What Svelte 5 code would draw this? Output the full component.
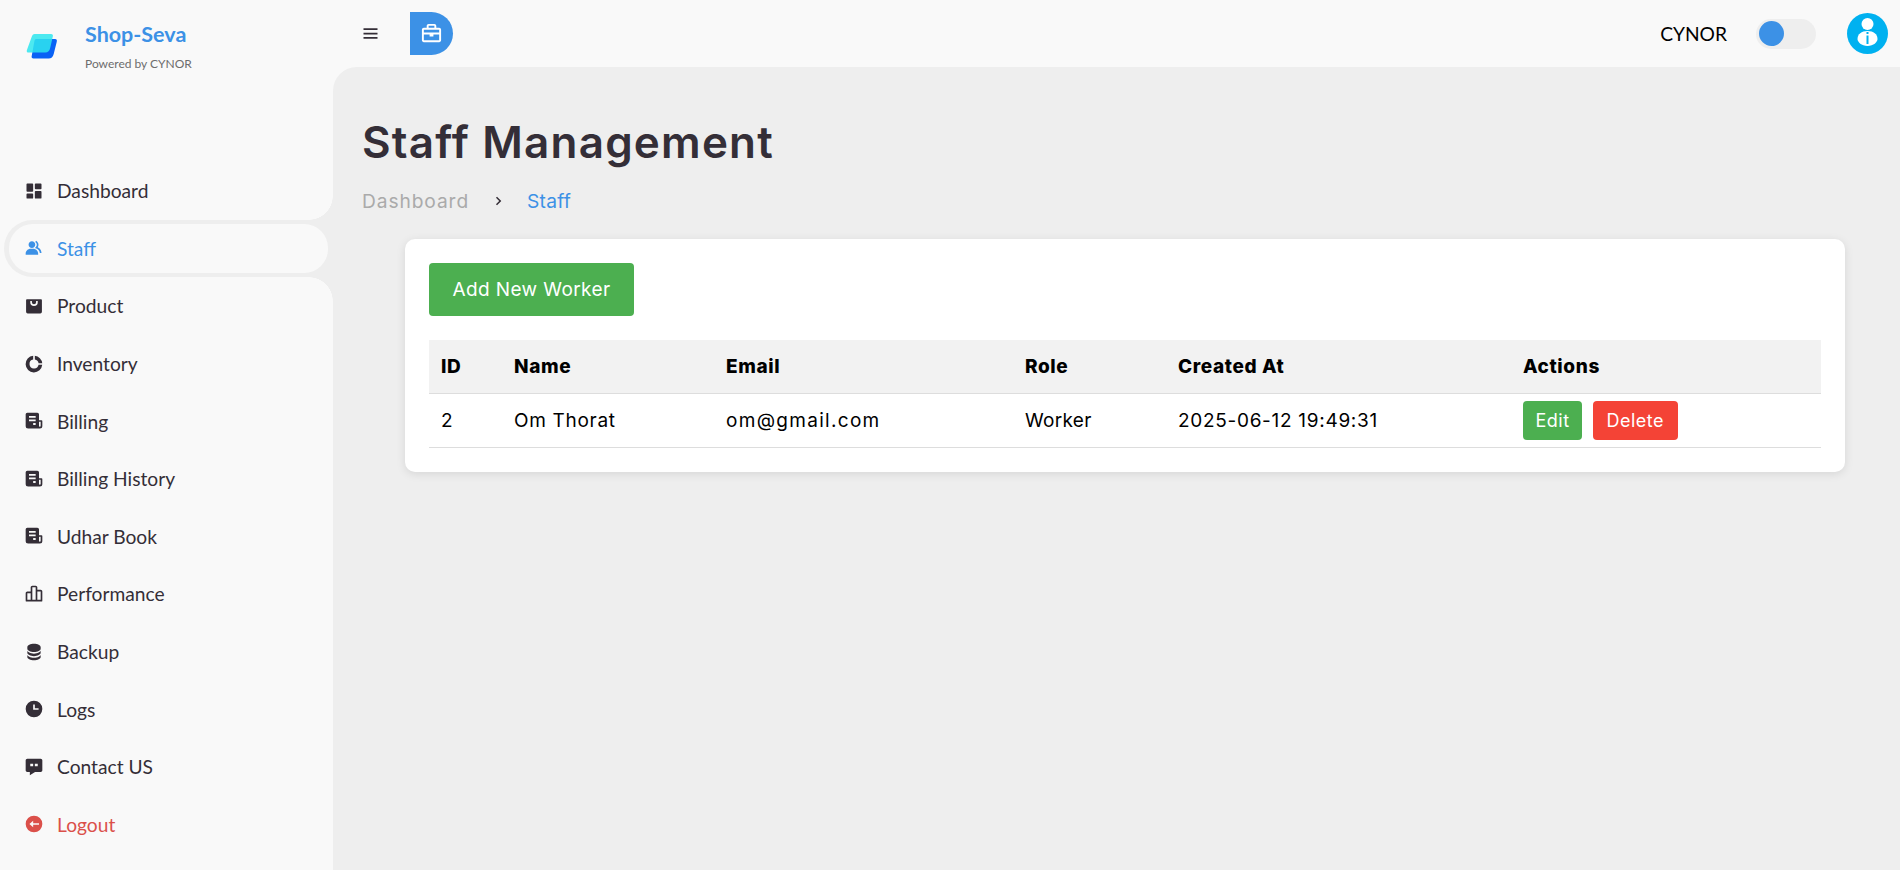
<script>
  const menu = [
    { label: 'Dashboard', icon: 'dashboard' },
    { label: 'Staff', icon: 'group', active: true },
    { label: 'Product', icon: 'bag' },
    { label: 'Inventory', icon: 'doughnut' },
    { label: 'Billing', icon: 'receipt' },
    { label: 'Billing History', icon: 'receipt' },
    { label: 'Udhar Book', icon: 'receipt' },
    { label: 'Performance', icon: 'bars' },
    { label: 'Backup', icon: 'data' },
    { label: 'Logs', icon: 'time' },
    { label: 'Contact US', icon: 'message' },
    { label: 'Logout', icon: 'logout', danger: true }
  ];

  const icons = {
    dashboard: 'M4 13h6a1 1 0 0 0 1-1V4a1 1 0 0 0-1-1H4a1 1 0 0 0-1 1v8a1 1 0 0 0 1 1zm-1 7a1 1 0 0 0 1 1h6a1 1 0 0 0 1-1v-4a1 1 0 0 0-1-1H4a1 1 0 0 0-1 1v4zm10 0a1 1 0 0 0 1 1h6a1 1 0 0 0 1-1v-7a1 1 0 0 0-1-1h-6a1 1 0 0 0-1 1v7zm1-10h6a1 1 0 0 0 1-1V4a1 1 0 0 0-1-1h-6a1 1 0 0 0-1 1v5a1 1 0 0 0 1 1z',
    group: 'M16.604 11.048a5.67 5.67 0 0 0 .751-3.44c-.179-1.784-1.175-3.361-2.803-4.44l-1.105 1.666c1.119.742 1.8 1.799 1.918 2.974a3.693 3.693 0 0 1-1.072 2.986l-1.192 1.192 1.618.475C18.951 13.701 19 17.957 19 18h2c0-1.789-.956-5.285-4.396-6.952zM9.5 12c2.206 0 4-1.794 4-4s-1.794-4-4-4-4 1.794-4 4 1.794 4 4 4zm1.5 1H8c-3.309 0-6 2.691-6 6v1h15v-1c0-3.309-2.691-6-6-6z',
    bag: 'M3.500 4h17a1 1 0 0 1 1 1v14a2 2 0 0 1-2 2h-15a2 2 0 0 1-2-2V5a1 1 0 0 1 1-1zM7.500 6v1.500a4.500 4.500 0 0 0 9 0V6h-2v1.500a2.500 2.500 0 0 1-5 0V6z',
    doughnut: 'M11 2.100a10 10 0 1 0 10.900 10.900h-4.400a5.500 5.500 0 1 1-6.500-6.500zM13 2.100v4.400a5.500 5.500 0 0 1 4.500 4.500h4.400A10 10 0 0 0 13 2.100z',
    receipt: 'M4 2h12a2 2 0 0 1 2 2v7h3a1 1 0 0 1 1 1v6a3 3 0 0 1-3 3H5a3 3 0 0 1-3-3V4a2 2 0 0 1 2-2zM18 13v5a1 1 0 0 0 2 0v-5zM6 6h8v2.200H6zM6 10.200h8v2.200H6zM11 14.500h3v2.200h-3z',
    bars: 'M20 7h-4V4c0-1.103-.897-2-2-2h-4c-1.103 0-2 .897-2 2v5H4c-1.103 0-2 .897-2 2v9a1 1 0 0 0 1 1h18a1 1 0 0 0 1-1V9c0-1.103-.897-2-2-2zM4 11h4v8H4v-8zm6-1V4h4v15h-4v-9zm10 9h-4V9h4v10z',
    data: 'M20 6c0-2.168-3.663-4-8-4S4 3.832 4 6v2c0 2.168 3.663 4 8 4s8-1.832 8-4V6zM12 19c-4.337 0-8-1.832-8-4v3c0 2.168 3.663 4 8 4s8-1.832 8-4v-3c0 2.168-3.663 4-8 4zM20 10c0 2.168-3.663 4-8 4s-8-1.832-8-4v3c0 2.168 3.663 4 8 4s8-1.832 8-4v-3z',
    time: 'M12 2a10 10 0 1 0 0 20a10 10 0 0 0 0-20zM11 6.500h2V11h4.500v2H11z',
    message: 'M20 2H4c-1.103 0-2 .897-2 2v12c0 1.103.897 2 2 2h3v3.767L13.277 18H20c1.103 0 2-.897 2-2V4c0-1.103-.897-2-2-2zM7.500 8h3.500v3H7.500zM13 8h3.500v3H13z',
    logout: 'M12 2a10 10 0 1 0 0 20a10 10 0 0 0 0-20zM6.500 12l4.500-4v3h7v2h-7v3z'
  };

  const workers = [
    { id: 2, name: 'Om Thorat', email: 'om@gmail.com', role: 'Worker', createdAt: '2025-06-12 19:49:31' }
  ];
</script>

<div class="layout">
  <aside class="sidebar">
    <div class="brand">
      <svg class="logo" viewBox="0 0 32 27" width="32" height="27">
        <path class="logo-back" d="M10 6h19q2.500 0 1.700 3l-3 12q-1.200 4.500-5 4.500H7.500q-2.500 0-1.700-3l2.700-15q.3-1.500 1.500-1.500z" />
        <path class="logo-front" d="M8.500 1h16.500q2.500 0 1.800 2.500l-2.500 11q-1 5-5 5H2.500q-2.500 0-1.500-2.800L6 3q.8-2 2.500-2z" />
      </svg>
      <div class="brand-text">
        <span class="brand-name">Shop-Seva</span>
        <span class="brand-sub">Powered by CYNOR</span>
      </div>
    </div>

    <ul class="menu">
      {#each menu as item}
        <li class:active={item.active} class:danger={item.danger}>
          <a href="#top">
            <svg viewBox="0 0 24 24" width="20" height="20"><path fill-rule="evenodd" d={icons[item.icon]} /></svg>
            <span>{item.label}</span>
          </a>
        </li>
      {/each}
    </ul>
  </aside>

  <div class="right">
    <header class="topbar">
      <svg class="burger" viewBox="0 0 24 24" width="21" height="21"><path d="M4 6h16v2H4zm0 5h16v2H4zm0 5h16v2H4z" /></svg>
      <span class="case-btn">
        <svg viewBox="0 0 24 24" width="23" height="23"><path d="M20 6h-3V4c0-1.103-.897-2-2-2H9c-1.103 0-2 .897-2 2v2H4c-1.103 0-2 .897-2 2v11c0 1.103.897 2 2 2h16c1.103 0 2-.897 2-2V8c0-1.103-.897-2-2-2zm-5-2v2H9V4h6zM8 8h12v3H4V8h4zM4 19v-6h6v2h4v-2h6l.001 6H4z" /></svg>
      </span>
      <span class="owner">CYNOR</span>
      <span class="toggle"><span class="knob"></span></span>
      <svg class="avatar" viewBox="0 0 41 41" width="41" height="41">
        <circle cx="20.500" cy="20.500" r="20.500" fill="#00b1f0" />
        <circle cx="20.500" cy="11" r="6" fill="#fff" />
        <path d="M20.500 18c-6 0-10 3-10 8 0 3 4 7 10 7s10-4 10-7c0-5-4-8-10-8z" fill="#fff" />
        <path d="M19.500 19h2v2h-2zM19.500 22.500h2V31h-2z" fill="#00b1f0" />
      </svg>
    </header>

    <main class="content">
      <h1>Staff Management</h1>
      <div class="crumbs">
        <span class="crumb-muted">Dashboard</span>
        <svg viewBox="0 0 24 24" width="18" height="18"><path d="M10.700 17.700 16.400 12l-5.700-5.700-1.400 1.400L13.600 12l-4.300 4.300z" /></svg>
        <span class="crumb-current">Staff</span>
      </div>

      <section class="card">
        <button class="btn add">Add New Worker</button>
        <table>
          <thead>
            <tr>
              <th class="c-id">ID</th>
              <th class="c-name">Name</th>
              <th class="c-email">Email</th>
              <th class="c-role">Role</th>
              <th class="c-created">Created At</th>
              <th>Actions</th>
            </tr>
          </thead>
          <tbody>
            {#each workers as w}
              <tr>
                <td>{w.id}</td>
                <td>{w.name}</td>
                <td class="c-email">{w.email}</td>
                <td class="c-role">{w.role}</td>
                <td>{w.createdAt}</td>
                <td class="actions">
                  <button class="btn small edit">Edit</button>
                  <button class="btn small delete">Delete</button>
                </td>
              </tr>
            {/each}
          </tbody>
        </table>
      </section>
    </main>
  </div>
</div>

<style>
  :global(body) {
    margin: 0;
    overflow: hidden;
    background: #f9f9f9;
  }

  .layout {
    display: grid;
    grid-template-columns: 333px 1fr;
    height: 870px;
    background: #f9f9f9;
    color: #342e37;
  }

  .sidebar {
    font-family: Lato, sans-serif;
    display: flex;
    flex-direction: column;
  }

  .brand {
    height: 162px;
    box-sizing: border-box;
    display: flex;
    align-items: flex-start;
    padding: 21px 0 0 26px;
    gap: 27px;
  }

  .logo {
    margin-top: 12px;
    flex-shrink: 0;
  }

  .logo-back { fill: #0a62f5; }
  .logo-front { fill: #2fe6ee; opacity: 0.85; }

  .brand-text {
    display: flex;
    flex-direction: column;
  }

  .brand-name {
    font-size: 21.5px;
    font-weight: 700;
    color: #3c91e6;
    line-height: 26px;
  }

  .brand-sub {
    font-size: 12px;
    color: #6d6d6d;
    margin-top: 10px;
    line-height: 14px;
  }

  .menu {
    list-style: none;
    margin: 0;
    padding: 0;
  }

  .menu li {
    height: 57.6px;
    box-sizing: border-box;
    padding: 4px 5px;
    margin-left: 4px;
    border-radius: 29px 0 0 29px;
    position: relative;
  }

  .menu li a {
    display: flex;
    align-items: center;
    gap: 13px;
    height: 100%;
    padding-left: 15px;
    font-size: 19.2px;
    color: #342e37;
    text-decoration: none;
    border-radius: 24px;
  }

  .menu svg {
    fill: currentColor;
    flex-shrink: 0;
  }

  .menu li.active {
    background: #eee;
  }

  .menu li.active a {
    background: #f9f9f9;
    color: #3c91e6;
  }

  /* the curved notches above and below the active row */
  .menu li.active::before,
  .menu li.active::after {
    content: '';
    position: absolute;
    right: 0;
    width: 24px;
    height: 24px;
    pointer-events: none;
  }

  .menu li.active::before {
    top: -24px;
    background: radial-gradient(circle at 0 0, transparent 23.5px, #eee 24px);
  }

  .menu li.active::after {
    bottom: -24px;
    background: radial-gradient(circle at 0 100%, transparent 23.5px, #eee 24px);
  }

  .menu li.danger a {
    color: #db504a;
  }

  .right {
    display: flex;
    flex-direction: column;
    min-width: 0;
  }

  .topbar {
    height: 67px;
    flex-shrink: 0;
    display: flex;
    align-items: center;
    padding: 0 12px 0 27px;
    font-family: Lato, sans-serif;
  }

  .burger {
    fill: #342e37;
    flex-shrink: 0;
  }

  .case-btn {
    width: 43px;
    height: 43px;
    margin-left: 29px;
    background: #3c91e6;
    border-radius: 0 21.5px 21.5px 0;
    display: flex;
    align-items: center;
    justify-content: center;
  }

  .case-btn svg { fill: #fff; }

  .owner {
    margin-left: auto;
    font-size: 19.2px;
    color: #000;
  }

  .toggle {
    width: 60px;
    height: 30px;
    margin-left: 29px;
    background: #eee;
    border-radius: 15px;
    display: flex;
    align-items: center;
    padding-left: 3px;
    box-sizing: border-box;
  }

  .knob {
    width: 25px;
    height: 25px;
    border-radius: 50%;
    background: #3c91e6;
  }

  .avatar {
    margin-left: 31px;
  }

  .content {
    flex: 1;
    background: #eee;
    border-radius: 24px 0 0 0;
    padding: 0 55px 0 29px;
    font-family: Inter, sans-serif;
  }

  h1 {
    margin: 46px 0 0;
    font-size: 44px;
    line-height: 58px;
    font-weight: 600;
    letter-spacing: 1.2px;
    color: #342e37;
  }

  .crumbs {
    display: flex;
    align-items: center;
    margin-top: 16px;
    font-size: 19.2px;
    letter-spacing: 0.9px;
    line-height: 28px;
  }

  .crumbs svg {
    margin: 0 20px 0 20px;
    fill: #342e37;
  }

  .crumb-muted { color: #aaa; }
  .crumb-current { color: #3c91e6; letter-spacing: 0.2px; }

  .card {
    margin: 24px 0 0 43px;
    background: #fff;
    border-radius: 10px;
    padding: 24px;
    box-shadow: 0 2px 10px rgba(0, 0, 0, 0.1);
  }

  .btn {
    border: none;
    border-radius: 4px;
    color: #fff;
    font-family: inherit;
    cursor: pointer;
  }

  .add {
    display: block;
    width: 205px;
    height: 53px;
    background: #4caf50;
    font-size: 19px;
    letter-spacing: 0.4px;
  }

  table {
    width: 100%;
    margin-top: 24px;
    border-collapse: collapse;
    table-layout: fixed;
    color: #000;
    font-size: 19px;
    letter-spacing: 0.7px;
  }

  th, td {
    padding: 0 12px;
    height: 53px;
    text-align: left;
    border-bottom: 1px solid #ddd;
  }

  thead tr { background: #f2f2f2; }

  th {
    font-weight: 800;
    letter-spacing: 0.6px;
  }

  .c-id { width: 73px; box-sizing: border-box; }
  .c-name { width: 212px; box-sizing: border-box; }
  .c-email { width: 299px; box-sizing: border-box; }
  .c-role { width: 153px; box-sizing: border-box; }
  .c-created { width: 345px; box-sizing: border-box; }

  td.c-email { letter-spacing: 1.3px; }
  td.c-role { letter-spacing: 0.3px; }

  .actions {
    font-size: 0;
  }

  .small {
    height: 39px;
    font-size: 18px;
    letter-spacing: 0.5px;
    vertical-align: middle;
  }

  .edit { width: 59px; background: #4caf50; }
  .delete { width: 85px; margin-left: 10px; background: #f44336; }
</style>
